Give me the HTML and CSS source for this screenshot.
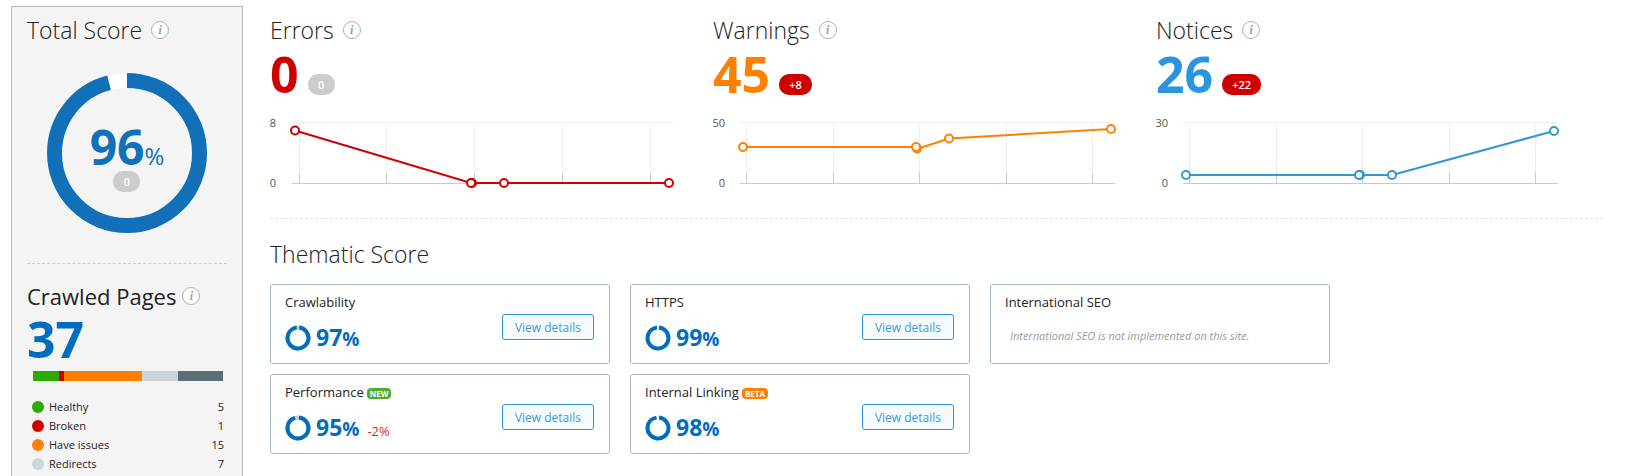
FILE: index.html
```html
<!DOCTYPE html>
<html lang="en">
<head>
  <meta charset="UTF-8" />
  <meta name="viewport" content="width=device-width, initial-scale=1.0"/>
  <title>Site Audit</title>
  <link rel="stylesheet" href="styles.css">
</head>
<body>
  <div class="page">
    <aside class="sidebar">
      <h2 class="title">Total Score <button class="info" aria-label="About total score">i</button></h2>
      <div class="gauge">
        <svg class="gauge-ring" viewBox="0 0 160 160">
          <circle cx="80" cy="80" r="72.5" fill="none" stroke="#fff" stroke-width="15"/>
          <circle cx="80" cy="80" r="72.5" fill="none" stroke="#1170b8" stroke-width="15" pathLength="100" stroke-dasharray="96 4" transform="rotate(-90 80 80)"/>
        </svg>
        <div class="gauge-label">
          <div class="gauge-value">96<span>%</span></div>
          <span class="pill">0</span>
        </div>
      </div>

      <section class="crawled">
        <h2 class="title regular">Crawled Pages <button class="info" aria-label="About crawled pages">i</button></h2>
        <div class="big blue">37</div>
        <div class="bar">
          <span class="green-bg" style="flex-grow: 26"></span>
          <span class="red-bg" style="flex-grow: 5"></span>
          <span class="orange-bg" style="flex-grow: 78"></span>
          <span class="gray-bg" style="flex-grow: 36"></span>
          <span class="slate-bg" style="flex-grow: 45"></span>
        </div>
        <ul class="legend">
          <li><span class="dot green-bg"></span>Healthy<b>5</b></li>
          <li><span class="dot red-bg"></span>Broken<b>1</b></li>
          <li><span class="dot orange-bg"></span>Have issues<b>15</b></li>
          <li><span class="dot gray-bg"></span>Redirects<b>7</b></li>
        </ul>
      </section>
    </aside>

    <main class="main">
      <div class="stats">
        <section class="stat">
          <h2 class="title">Errors <button class="info" aria-label="About errors">i</button></h2>
          <div class="stat-row"><span class="big red">0</span><span class="pill">0</span></div>
          <svg class="chart" viewBox="0 0 403 80">
            <text x="6" y="17">8</text>
            <text x="6" y="77">0</text>
            <path class="grid" d="M22 12.5H403M29.5 13V63M116.5 13V63M204.5 13V63M292.5 13V63M380.5 13V63"/>
            <path class="axis" d="M22 73.5H403M29.5 63V73M116.5 63V73M204.5 63V73M292.5 63V73M380.5 63V73"/>
            <g class="series red-line">
              <polyline points="25,20.5 201,73 203,73 234,73 399,73"/>
              <circle cx="25" cy="20.5" r="4"/>
              <circle cx="202" cy="73" r="4"/>
              <circle cx="201" cy="73" r="4"/>
              <circle cx="234" cy="73" r="4"/>
              <circle cx="399" cy="73" r="4"/>
            </g>
          </svg>
        </section>

        <section class="stat">
          <h2 class="title">Warnings <button class="info" aria-label="About warnings">i</button></h2>
          <div class="stat-row"><span class="big orange">45</span><span class="pill up">+8</span></div>
          <svg class="chart" viewBox="0 0 403 80">
            <text x="12" y="17">50</text>
            <text x="12" y="77">0</text>
            <path class="grid" d="M27 12.5H402M33.5 13V63M120.5 13V63M206.5 13V63M293.5 13V63M379.5 13V63"/>
            <path class="axis" d="M27 73.5H402M33.5 63V73M120.5 63V73M206.5 63V73M293.5 63V73M379.5 63V73"/>
            <g class="series orange-line">
              <polyline points="30,37 203,37 204,39 236,28.5 398,19"/>
              <circle cx="30" cy="37" r="4"/>
              <circle cx="204" cy="38.5" r="4"/>
              <circle cx="203" cy="37" r="4"/>
              <circle cx="236" cy="28.5" r="4"/>
              <circle cx="398" cy="19" r="4"/>
            </g>
          </svg>
        </section>

        <section class="stat">
          <h2 class="title">Notices <button class="info" aria-label="About notices">i</button></h2>
          <div class="stat-row"><span class="big sky">26</span><span class="pill up">+22</span></div>
          <svg class="chart" viewBox="0 0 403 80">
            <text x="12" y="17">30</text>
            <text x="12" y="77">0</text>
            <path class="grid" d="M27 12.5H402M33.5 13V63M120.5 13V63M206.5 13V63M293.5 13V63M379.5 13V63"/>
            <path class="axis" d="M27 73.5H402M33.5 63V73M120.5 63V73M206.5 63V73M293.5 63V73M379.5 63V73"/>
            <g class="series sky-line">
              <polyline points="30,65 203,65 236,65 398,21"/>
              <circle cx="30" cy="65" r="4"/>
              <circle cx="204" cy="65" r="4"/>
              <circle cx="203" cy="65" r="4"/>
              <circle cx="236" cy="65" r="4"/>
              <circle cx="398" cy="21" r="4"/>
            </g>
          </svg>
        </section>
      </div>

      <section class="thematic">
        <h2 class="title">Thematic Score</h2>
        <div class="cards">
          <article class="card">
            <div>
              <h3>Crawlability</h3>
              <div class="score">
                <svg class="ring" viewBox="0 0 26 26"><circle class="track" cx="13" cy="13" r="10.5"/><circle class="fill" cx="13" cy="13" r="10.5" pathLength="100" stroke-dasharray="96 4" transform="rotate(-83 13 13)"/></svg>
                <strong>97<small>%</small></strong>
              </div>
            </div>
            <button class="details">View details</button>
          </article>

          <article class="card">
            <div>
              <h3>HTTPS</h3>
              <div class="score">
                <svg class="ring" viewBox="0 0 26 26"><circle class="fill" cx="13" cy="13" r="10.5" pathLength="100" stroke-dasharray="97 3" transform="rotate(-85 13 13)"/></svg>
                <strong>99<small>%</small></strong>
              </div>
            </div>
            <button class="details">View details</button>
          </article>

          <article class="card">
            <div>
              <h3>International SEO</h3>
              <p class="note">International SEO is not implemented on this site.</p>
            </div>
          </article>

          <article class="card">
            <div>
              <h3>Performance<span class="tag green-tag">NEW</span></h3>
              <div class="score">
                <svg class="ring" viewBox="0 0 26 26"><circle class="track" cx="13" cy="13" r="10.5"/><circle class="fill" cx="13" cy="13" r="10.5" pathLength="100" stroke-dasharray="94 6" transform="rotate(-85 13 13)"/></svg>
                <strong>95<small>%</small></strong>
                <span class="delta">-2%</span>
              </div>
            </div>
            <button class="details">View details</button>
          </article>

          <article class="card">
            <div>
              <h3>Internal Linking<span class="tag orange-bg">BETA</span></h3>
              <div class="score">
                <svg class="ring" viewBox="0 0 26 26"><circle class="fill" cx="13" cy="13" r="10.5" pathLength="100" stroke-dasharray="96 4" transform="rotate(-84 13 13)"/></svg>
                <strong>98<small>%</small></strong>
              </div>
            </div>
            <button class="details">View details</button>
          </article>
        </div>
      </section>
    </main>
  </div>
</body>
</html>
```
FILE: styles.css
```css
* {
  box-sizing: border-box;
}

body {
  margin: 0;
  background: #fff;
  color: #222;
  font-family: "Open Sans", "Noto Sans", sans-serif;
  font-size: 12px;
}

h2, h3, p, ul {
  margin: 0;
  padding: 0;
}

button {
  font-family: inherit;
  cursor: pointer;
}

.page {
  display: flex;
  gap: 27px;
  height: 100vh;
  padding: 6px 25px 0 11px;
  overflow: hidden;
}

.sidebar {
  flex: 0 0 232px;
  padding: 7px 15px 0;
  background: #f4f4f4;
  border: 1px solid #bababa;
  border-bottom: none;
}

.title {
  display: flex;
  align-items: center;
  gap: 9px;
  font-size: 23px;
  font-weight: 300;
  line-height: 32px;
}

.title.regular {
  font-weight: 400;
  gap: 6px;
  font-size: 22px;
}

.info {
  width: 18px;
  height: 18px;
  padding: 0;
  border: 1px solid #a3b3b9;
  border-radius: 50%;
  background: #fff;
  color: #93a3a9;
  font: italic bold 12px/16px "Liberation Serif", serif;
}

.gauge {
  display: grid;
  place-items: center;
  margin-top: 27px;
}

.gauge-ring,
.gauge-label {
  grid-area: 1 / 1;
}

.gauge-ring {
  width: 160px;
  height: 160px;
}

.gauge-label {
  display: flex;
  flex-direction: column;
  align-items: center;
  padding-top: 8px;
}

.gauge-value {
  color: #1170b8;
  font-size: 48px;
  font-weight: 700;
  line-height: 48px;
}

.gauge-value span {
  font-size: 24px;
  font-weight: 400;
  line-height: 24px;
}

.pill {
  min-width: 27px;
  height: 21px;
  padding: 0 10px;
  border-radius: 10px;
  background: #ccc;
  color: #fff;
  font-size: 11px;
  font-weight: 600;
  line-height: 21px;
  text-align: center;
}

.pill.up {
  background: #d10000;
}

.crawled {
  margin-top: 30px;
  padding-top: 16px;
  border-top: 1px dashed #ccc;
}

.big {
  font-size: 50px;
  font-weight: 700;
  line-height: 54px;
}

.blue {
  color: #006dbf;
}

.red {
  color: #d10000;
}

.orange {
  color: #ff8000;
}

.sky {
  color: #2b94e1;
}

.green-bg {
  background: #2baa00;
}

.red-bg {
  background: #d10000;
}

.orange-bg {
  background: #ff8000;
}

.gray-bg {
  background: #ccd6d8;
}

.slate-bg {
  background: #5a6e73;
}

.bar {
  display: flex;
  height: 10px;
  margin: 5px 4px 0 6px;
}

.legend {
  margin: 16px 3px 0 5px;
  list-style: none;
}

.legend li {
  display: flex;
  align-items: center;
  gap: 5px;
  line-height: 19px;
  font-size: 11px;
}

.legend b {
  margin-left: auto;
  font-weight: 400;
}

.dot {
  width: 12px;
  height: 12px;
  border-radius: 50%;
}

.main {
  flex: 1;
  min-width: 0;
}

.stats {
  display: grid;
  grid-template-columns: repeat(3, 1fr);
  padding: 8px 4px 28px 0;
  border-bottom: 1px dashed #e4e4e4;
}

.stat {
  padding-right: 40px;
}

.stat-row {
  display: flex;
  align-items: center;
  gap: 9px;
  height: 56px;
}

.stat-row .pill {
  margin-top: 20px;
}

.chart {
  display: block;
  width: 100%;
  margin-top: 8px;
  overflow: visible;
}

.chart text {
  fill: #555;
  font-size: 11px;
  text-anchor: end;
}

.grid {
  stroke: #eee;
}

.axis {
  fill: none;
  stroke: #b9cddd;
}

.series {
  fill: none;
  stroke-width: 2;
}

.series circle {
  fill: #fff;
}

.red-line {
  stroke: #d10000;
}

.orange-line {
  stroke: #ff8000;
}

.sky-line {
  stroke: #3498d0;
}

.thematic {
  padding-top: 19px;
}

.cards {
  display: grid;
  grid-template-columns: repeat(3, 1fr);
  gap: 10px 20px;
  max-width: 1060px;
  margin-top: 14px;
}

.card {
  display: flex;
  align-items: center;
  justify-content: space-between;
  min-height: 80px;
  padding: 13px 15px 7px 14px;
  border: 1px solid #a9b8bd;
  border-radius: 3px;
}

.card > div {
  align-self: flex-start;
}

.card h3 {
  display: flex;
  align-items: flex-start;
  gap: 3px;
  font-size: 13px;
  font-weight: 400;
  line-height: 8px;
}

.tag {
  height: 11px;
  padding: 0 3px;
  border-radius: 4px;
  color: #fff;
  font-size: 8px;
  font-weight: 700;
  line-height: 11px;
}

.green-tag {
  background: #4eae32;
}

.score {
  display: flex;
  align-items: center;
  gap: 5px;
  margin-top: 17px;
  height: 26px;
}

.card h3 {
  height: 10px;
}

.ring {
  width: 26px;
  height: 26px;
}

.ring circle {
  fill: none;
  stroke-width: 4;
}

.ring .track {
  stroke: #ccc;
}

.ring .fill {
  stroke: #006dbf;
}

.score strong {
  color: #006dbf;
  font-size: 23px;
  line-height: 26px;
}

.score small {
  font-size: 19px;
}

.delta {
  margin: 6px 0 0 3px;
  color: #d91e2a;
  font-size: 13px;
}

.note {
  margin: 20px 0 0 5px;
  color: #999;
  font-size: 11px;
  font-style: italic;
}

.details {
  width: 92px;
  height: 26px;
  padding: 0;
  border: 1px solid #2b94e1;
  border-radius: 3px;
  background: #f5faff;
  color: #3f97dc;
  font-size: 12px;
}

.details:hover {
  background: #e6f3ff;
}
```
